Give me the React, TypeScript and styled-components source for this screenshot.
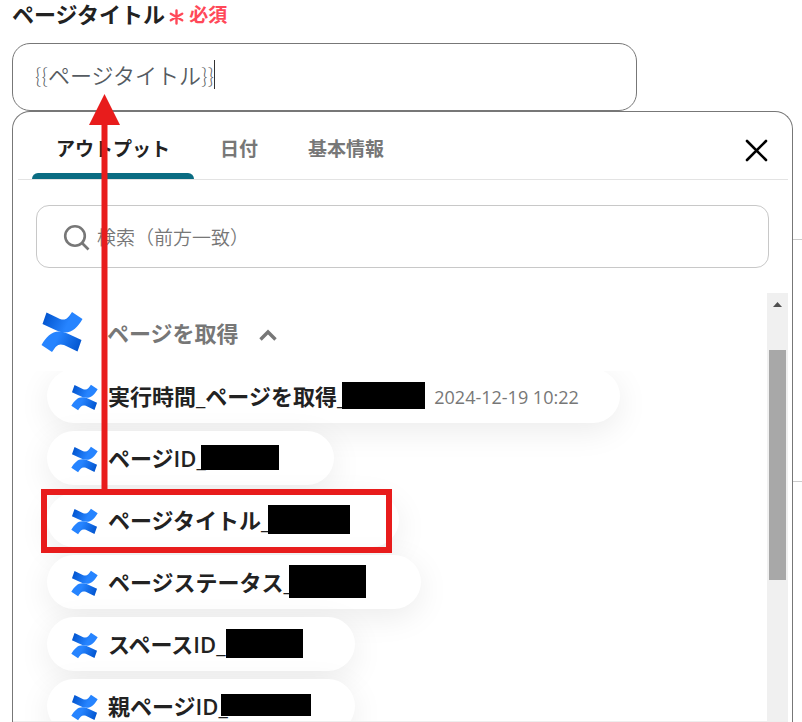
import React from "react";
import styled, { createGlobalStyle } from "styled-components";

const GlobalStyle = createGlobalStyle`
  *, *::before, *::after { box-sizing: border-box; }
  body { margin: 0; background: #fff; color: #222; font-family: "Open Sans", "Noto Sans CJK JP", sans-serif; }
  button, input { font: inherit; color: inherit; }
`;

const Page = styled.main`
  position: relative;
  display: flex;
  flex-direction: column;
  height: 100vh;
  overflow: hidden;
  padding: 0 9px 0 12px;
`;

const FieldLabel = styled.label`
  display: flex;
  align-items: center;
  height: 28px;
  margin-bottom: 15px;
  font-size: 22px;
  font-weight: 700;
  line-height: 28px;
`;

const Required = styled.span`
  display: flex;
  align-items: center;
  gap: 5px;
  margin-left: 4px;
  padding-top: 2px;
  color: #ff4858;
  font-size: 19px;

  svg {
    margin-top: 4px;
  }
`;

const TitleField = styled.div`
  position: relative;
  flex: none;
  width: 80%;
`;

const TitleInput = styled.input`
  display: block;
  width: 100%;
  height: 68px;
  padding: 0 22px 6px;
  border: 1px solid #777;
  border-radius: 18px;
  outline: none;
  background: #fff;
  color: #555b61;
  font-family: Lato, "Noto Sans CJK JP", sans-serif;
  font-size: 22px;
  font-weight: 350;
`;

const Caret = styled.span`
  position: absolute;
  left: 202px;
  top: 17px;
  width: 1px;
  height: 29px;
  background: #333;
`;

const Panel = styled.section`
  flex: 1;
  min-height: 0;
  display: flex;
  flex-direction: column;
  border: 1px solid #777;
  border-bottom: 0;
  border-radius: 18px 18px 0 0;
  background: #fff;
`;

const PanelHeader = styled.header`
  flex: none;
  display: flex;
  justify-content: space-between;
  height: 68px;
  margin: 0 4px 0 5px;
  padding: 0 20px 0 14px;
  border-bottom: 1px solid #e3e3e3;
`;

const Tabs = styled.div`
  display: flex;
  gap: 2px;
`;

const Tab = styled.button<{ $active?: boolean }>`
  position: relative;
  padding: 6px 24px 0;
  border: 0;
  background: none;
  color: ${(p) => (p.$active ? "#222" : "#777")};
  font-size: 19px;
  font-weight: 700;
  line-height: 24px;
  &::after {
    content: "";
    position: absolute;
    inset: auto 0 0;
    height: 6px;
    border-radius: 6px 6px 0 0;
    background: ${(p) => (p.$active ? "#0a6c82" : "transparent")};
  }
`;

const CloseButton = styled.button`
  display: flex;
  align-items: center;
  padding: 10px 0 0;
  border: 0;
  background: none;
`;

const SearchBox = styled.label`
  flex: none;
  display: flex;
  align-items: center;
  gap: 7px;
  height: 63px;
  margin: 25px 23px 25px;
  padding: 2px 26px 0;
  border: 1px solid #c8c8c8;
  border-radius: 13px;
`;

const SearchInput = styled.input`
  flex: 1;
  min-width: 0;
  padding: 0;
  border: 0;
  outline: none;
  background: none;
  font-size: 19px;
  font-weight: 350;
  &::placeholder { color: #777; opacity: 1; }
`;

const Body = styled.div`
  flex: 1;
  min-height: 0;
  display: flex;
  margin-right: 4px;
  border-bottom: 1px solid #eee;
`;

const Results = styled.div`
  flex: 1;
  min-width: 0;
  display: flex;
  flex-direction: column;
`;

const GroupButton = styled.button`
  flex: none;
  display: flex;
  align-items: center;
  height: 78px;
  padding: 0 0 0 28px;
  border: 0;
  background: none;
  color: #777;
  font-size: 22px;
  font-weight: 700;
`;

const GroupName = styled.span`
  margin: 0 20px 0 24px;
`;

const Chevron = styled.svg`
  margin-top: 6px;
`;

const ListViewport = styled.div`
  flex: 1;
  min-height: 0;
  overflow: hidden;
`;

const List = styled.ul`
  display: flex;
  flex-direction: column;
  align-items: flex-start;
  gap: 8px;
  margin: -2px 0 0;
  padding: 0 0 0 34px;
  list-style: none;
`;

const Pill = styled.button`
  display: flex;
  align-items: center;
  height: 54px;
  padding: 2px 41px 0 24px;
  border: 0;
  border-radius: 27px;
  background: #fff;
  box-shadow: 0 8px 32px rgba(0, 0, 0, 0.08);
  font-size: 22px;
  font-weight: 600;
  white-space: nowrap;
`;

const PillName = styled.span`
  margin-left: 10px;
  padding-bottom: 4px;
`;

const Value = styled.span<{ $width: number; $overlap: number }>`
  display: flex;
  width: ${(p) => p.$width}px;
  margin-left: ${(p) => -p.$overlap}px;
  padding-bottom: 4px;
`;

const Redaction = styled.span<{ $width: number; $height: number }>`
  width: ${(p) => p.$width}px;
  height: ${(p) => p.$height}px;
  background: #000;
`;

const Time = styled.time`
  color: #777;
  font-size: 18px;
  font-weight: 400;
`;

const Scrollbar = styled.div`
  flex: none;
  display: flex;
  flex-direction: column;
  align-items: center;
  width: 21px;
  padding-top: 9px;
  background: #f0f0f0;
`;

const Thumb = styled.div`
  width: 17px;
  height: 55%;
  margin-top: 43px;
  background: #a8a8a8;
`;

const Highlight = styled.div`
  position: absolute;
  left: 41px;
  top: 489px;
  width: 351px;
  height: 64px;
  border: 6px solid #e81c1c;
`;

const Arrow = styled.svg`
  position: absolute;
  left: 89px;
  top: 94px;
  pointer-events: none;
`;

const SideRule = styled.div<{ $top: number }>`
  position: absolute;
  right: 0;
  top: ${(p) => p.$top}px;
  width: 9px;
  height: 1px;
  background: #ccc;
`;

function ConfluenceLogo({ size }: { size: number }) {
  const id = React.useId();
  const wing = "M0.5 34 L11 41 C15 35 17 32 23 34 L36.5 40.5 L40.5 29 L27 22.8 C14 17 7 23 0.5 34 Z";
  return (
    <svg width={size} height={size} viewBox="0 0 42 42" aria-hidden="true">
      <defs>
        <linearGradient id={id} gradientUnits="userSpaceOnUse" x1="40" y1="37" x2="14" y2="25">
          <stop offset="0" stopColor="#0052cc" />
          <stop offset="0.9" stopColor="#2684ff" />
        </linearGradient>
      </defs>
      <path d={wing} fill={`url(#${id})`} />
      <path d={wing} fill={`url(#${id})`} transform="rotate(180 21 21)" />
    </svg>
  );
}

const items = [
  { name: "実行時間_ページを取得_", value: 92, overlap: 4, bar: 83, height: 27, time: "2024-12-19 10:22" },
  { name: "ページID_", value: 92, overlap: 5, bar: 78, height: 25 },
  { name: "ページタイトル_", value: 90, overlap: 2, bar: 82, height: 29 },
  { name: "ページステータス_", value: 91, overlap: 4, bar: 77, height: 33 },
  { name: "スペースID_", value: 88, overlap: 0, bar: 77, height: 29 },
  { name: "親ページID_", value: 93, overlap: 7, bar: 90, height: 22 },
];

export default function App() {
  return (
    <Page>
      <GlobalStyle />
      <FieldLabel htmlFor="page-title">
        ページタイトル
        <Required>
          <svg width="15" height="16" viewBox="0 0 15 16" stroke="currentColor" strokeWidth="2.4" strokeLinecap="round" aria-hidden="true">
            <path d="M7.5 1.5v13M1.8 4.7l11.4 6.600M13.200 4.7L1.800 11.300" />
          </svg>
          必須
        </Required>
      </FieldLabel>
      <TitleField>
        <TitleInput id="page-title" defaultValue="{{ページタイトル}}" />
        <Caret />
      </TitleField>
      <Panel>
        <PanelHeader>
          <Tabs role="tablist">
            <Tab role="tab" aria-selected="true" $active>アウトプット</Tab>
            <Tab role="tab" aria-selected="false">日付</Tab>
            <Tab role="tab" aria-selected="false">基本情報</Tab>
          </Tabs>
          <CloseButton aria-label="閉じる">
            <svg width="23" height="23" viewBox="0 0 23 23" stroke="#000" strokeWidth="2.6" strokeLinecap="round">
              <path d="M2 2l19 19M21 2L2 21" />
            </svg>
          </CloseButton>
        </PanelHeader>
        <SearchBox>
          <svg width="27" height="27" viewBox="0 0 27 27" fill="none" stroke="#777" strokeWidth="2.6" aria-hidden="true">
            <circle cx="12" cy="12" r="9.8" />
            <path d="M19 19l6.5 6.5" />
          </svg>
          <SearchInput type="text" aria-label="検索" placeholder="検索（前方一致）" />
        </SearchBox>
        <Body>
          <Results>
            <GroupButton aria-expanded="true">
              <ConfluenceLogo size={42} />
              <GroupName>ページを取得</GroupName>
              <Chevron width="18" height="12" viewBox="0 0 18 12" fill="none" stroke="#777" strokeWidth="3.4" aria-hidden="true">
                <path d="M1.5 10.5L9 3l7.5 7.5" />
              </Chevron>
            </GroupButton>
            <ListViewport>
              <List>
                {items.map((item) => (
                  <li key={item.name}>
                    <Pill>
                      <ConfluenceLogo size={27} />
                      <PillName>{item.name}</PillName>
                      <Value $width={item.value} $overlap={item.overlap}>
                        <Redaction $width={item.bar} $height={item.height} />
                      </Value>
                      {item.time && <Time>{item.time}</Time>}
                    </Pill>
                  </li>
                ))}
              </List>
            </ListViewport>
          </Results>
          <Scrollbar>
            <svg width="9" height="5" viewBox="0 0 9 5" fill="#505050" aria-hidden="true">
              <path d="M4.5 0L9 5H0z" />
            </svg>
            <Thumb />
          </Scrollbar>
        </Body>
      </Panel>
      <SideRule $top={239} />
      <SideRule $top={481} />
      <Highlight />
      <Arrow width="32" height="396" viewBox="0 0 32 396" fill="#e81c1c" aria-hidden="true">
        <path d="M15.500 0L31 31H18.500V396H12.500V31H0z" />
      </Arrow>
    </Page>
  );
}
